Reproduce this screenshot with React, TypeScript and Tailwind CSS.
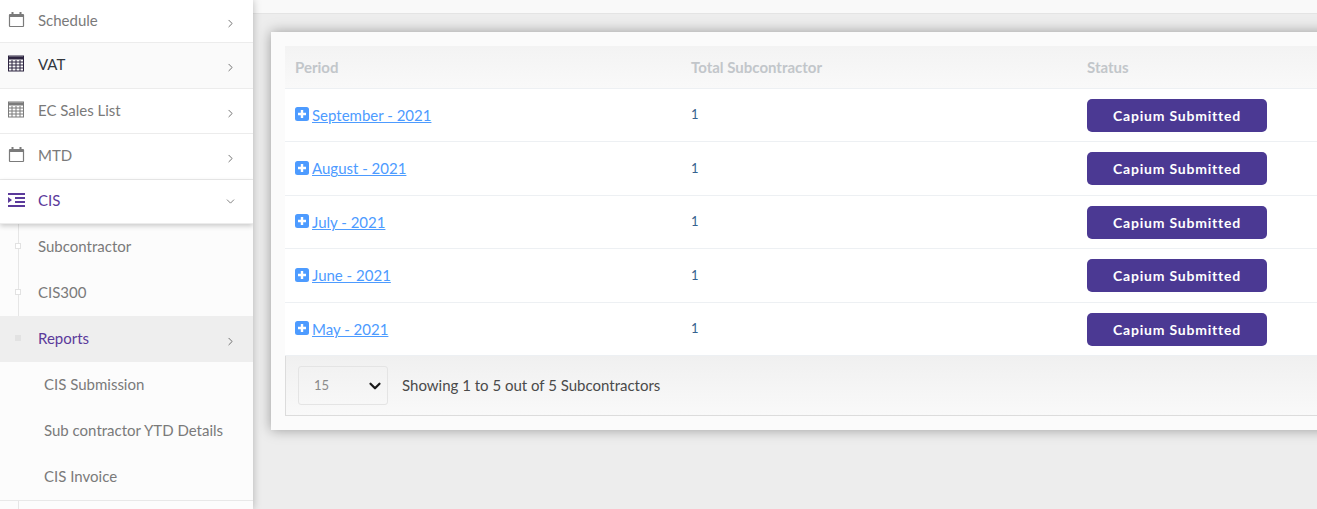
import React from "react";
import { ChevronDown, ChevronRight } from "lucide-react";

const font = "font-['Lato','Noto_Sans',sans-serif]";

function CalendarIcon() {
  return (
    <svg width="17" height="17" viewBox="0 0 17 17" fill="none" stroke="#7b7b7b">
      <rect x="1.5" y="3.5" width="14" height="12" rx="0.5" strokeWidth="1.2" />
      <path d="M1.5 5h14" strokeWidth="2" />
      <path d="M4.5 1v3M12.5 1v3" strokeWidth="2" />
    </svg>
  );
}

function TableIcon({ color }: { color: string }) {
  return (
    <svg width="16" height="17" viewBox="0 0 16 17" fill="none" stroke={color}>
      <rect x="0.5" y="1" width="15" height="15" strokeWidth="1" />
      <path d="M0.5 3h15" strokeWidth="3" />
      <path d="M1 7h14M1 10h14M1 13h14M4 5v11M8 5v11M12 5v11" strokeWidth="1" />
    </svg>
  );
}

function IndentIcon() {
  return (
    <svg width="17" height="14" viewBox="0 0 17 14" fill="#5b3a9b">
      <path d="M0 0h17v2H0zM7 4h10v2H7zM7 8h10v2H7zM0 12h17v2H0zM0 4l4 3-4 3z" />
    </svg>
  );
}

function MenuRow({
  icon,
  label,
  textClass = "text-[#7a7a7a]",
  rowClass = "h-[46px] bg-white",
  open = false,
}: {
  icon: React.ReactNode;
  label: string;
  textClass?: string;
  rowClass?: string;
  open?: boolean;
}) {
  return (
    <div className={`flex items-center border-b border-[#ececec] pl-2 pr-4 ${rowClass}`}>
      <div className="flex w-[30px] -translate-y-[2px]">{icon}</div>
      <span className={`flex-1 -translate-y-[1px] text-[15px] ${textClass}`}>{label}</span>
      {open ? (
        <ChevronDown size={13} strokeWidth={1.5} color="#666" />
      ) : (
        <ChevronRight size={13} strokeWidth={1.5} color="#555" className="translate-y-[2px]" />
      )}
    </div>
  );
}

function SubRow({
  label,
  active = false,
  dot = false,
}: {
  label: string;
  active?: boolean;
  dot?: boolean;
}) {
  return (
    <div className={`relative flex h-[46px] items-center pl-[38px] pr-4 ${active ? "bg-[#eeeeee]" : ""}`}>
      {dot && (
        <span
          className={`absolute left-[15px] top-[19px] size-[6px] border border-[#e2e2e2] ${
            active ? "bg-[#e2e2e2]" : "bg-white"
          }`}
        />
      )}
      <span className={`flex-1 -translate-y-[1px] text-[15px] ${active ? "text-[#5b3a9b]" : "text-[#7a7a7a]"}`}>
        {label}
      </span>
      {active && <ChevronRight size={13} strokeWidth={1.5} color="#555" className="translate-y-[2px]" />}
    </div>
  );
}

function PlusIcon() {
  return (
    <svg width="14" height="14" viewBox="0 0 14 14">
      <rect width="14" height="14" rx="2.5" fill="#4d9bff" />
      <path d="M7 3v8M3 7h8" stroke="#fff" strokeWidth="2.4" />
    </svg>
  );
}

function TableRow({ period, height }: { period: string; height: string }) {
  return (
    <div className={`grid grid-cols-[396px_396px_396px] items-center border-b border-[#edf0f3] bg-white ${height}`}>
      <div className="flex items-center gap-[3px] pl-[10px]">
        <span className="-translate-y-[1px]">
          <PlusIcon />
        </span>
        <a href="#" className="text-[15px] text-[#4d9bff] underline">
          {period}
        </a>
      </div>
      <div className="pl-[10px] text-[13px] text-[#35618f]">1</div>
      <div className="pl-[10px]">
        <button className="h-[33px] w-[180px] rounded-[5px] bg-[#4b3993] text-[14px] font-bold tracking-[0.8px] text-white">
          Capium Submitted
        </button>
      </div>
    </div>
  );
}

export default function App() {
  return (
    <div className={`flex h-[509px] w-[1317px] overflow-hidden bg-[#ededed] ${font}`}>
      <aside className="relative z-10 h-[509px] w-[253px] shrink-0 overflow-hidden bg-[#fcfcfc] shadow-[0_0_8px_rgba(0,0,0,0.25)]">
        <MenuRow icon={<CalendarIcon />} label="Schedule" rowClass="h-[43px] bg-white" />
        <MenuRow
          icon={<TableIcon color="#2d2440" />}
          label="VAT"
          textClass="text-[#33373d]"
          rowClass="h-[46px] bg-[#fafafa]"
        />
        <MenuRow icon={<TableIcon color="#7b7b7b" />} label="EC Sales List" rowClass="h-[45px] bg-white" />
        <MenuRow icon={<CalendarIcon />} label="MTD" />
        <div className="relative z-10 shadow-[0_2px_5px_rgba(0,0,0,0.2)]">
          <MenuRow icon={<IndentIcon />} label="CIS" textClass="text-[#5b3a9b]" rowClass="h-[44px] bg-white" open />
        </div>
        <div className="relative">
          <span className="absolute left-[18px] top-0 h-[138px] w-px bg-[#e6e6e6]" />
          <SubRow label="Subcontractor" dot />
          <SubRow label="CIS300" dot />
          <SubRow label="Reports" dot active />
          <div className="pl-[6px]">
            <SubRow label="CIS Submission" />
            <SubRow label="Sub contractor YTD Details" />
            <SubRow label="CIS Invoice" />
          </div>
          <div className="border-t border-[#e8e8e8] pl-[18px]">
            <div className="h-[10px] w-px bg-[#e6e6e6]" />
          </div>
        </div>
      </aside>

      <main className="min-w-0 flex-1">
        <div className="h-[14px] border-b border-[#e4e4e4] bg-[#f9f9f9]" />
        <div className="ml-[18px] mt-[18px] h-[398px] w-[1180px] bg-[#fbfbfb] p-[14px] shadow-[0_0_12px_rgba(0,0,0,0.35)]">
          <div className="grid h-[43px] grid-cols-[396px_396px_396px] items-center border-b border-[#edf0f3] bg-[linear-gradient(#f3f3f3,#f9f9f9)] text-[15px] font-bold text-[#c2c6ca]">
            <div className="pl-[10px]">Period</div>
            <div className="pl-[10px]">Total Subcontractor</div>
            <div className="pl-[10px]">Status</div>
          </div>
          <TableRow period="September - 2021" height="h-[53px]" />
          <TableRow period="August - 2021" height="h-[54px]" />
          <TableRow period="July - 2021" height="h-[53px]" />
          <TableRow period="June - 2021" height="h-[54px]" />
          <TableRow period="May - 2021" height="h-[53px]" />
          <div className="flex h-[60px] items-center gap-[14px] border-b border-l border-[#dcdcdc] bg-[linear-gradient(#f0f0f0,#f9f9f9)] pl-[12px]">
            <div className="flex h-[39px] w-[90px] items-center justify-between rounded-[3px] border border-[#e4e4e4] pl-[15px] pr-[3px] text-[13px] text-[#8a8a8a]">
              15
              <ChevronDown size={18} strokeWidth={3} color="#1a1a1a" />
            </div>
            <span className="text-[15px] text-[#4a4a4a]">Showing 1 to 5 out of 5 Subcontractors</span>
          </div>
        </div>
      </main>
    </div>
  );
}
